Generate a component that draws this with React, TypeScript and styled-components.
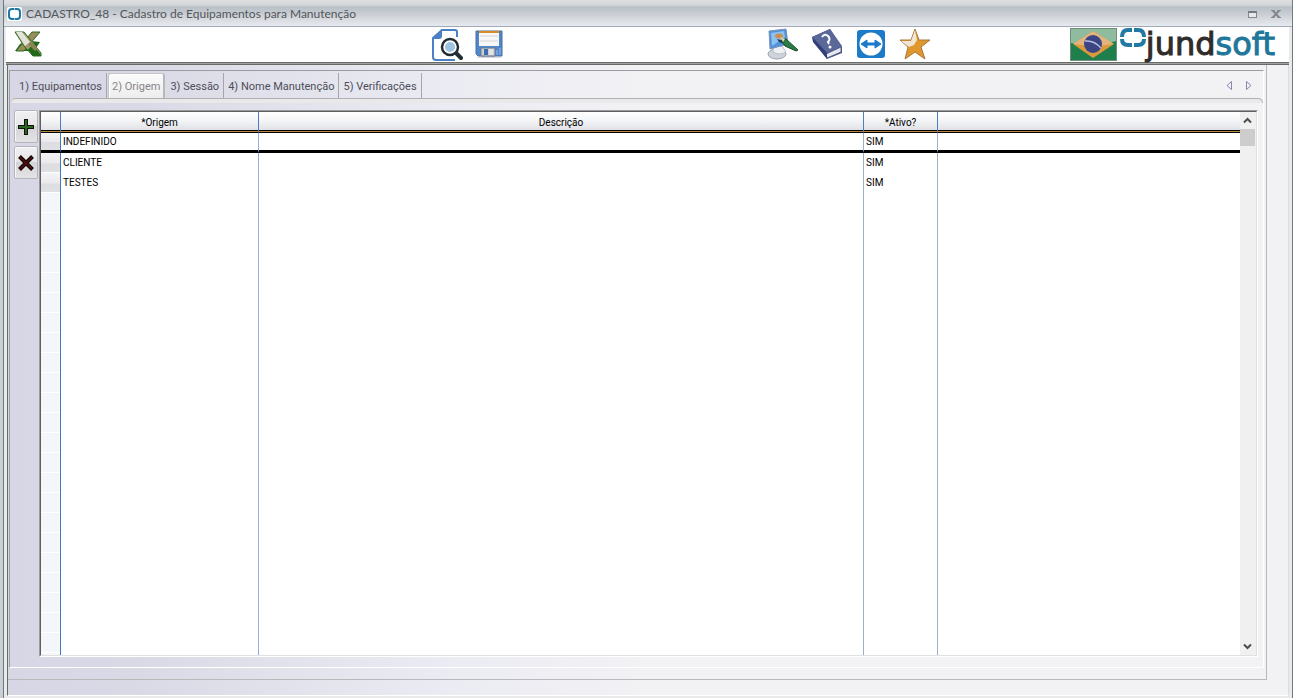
import React, { useState } from "react";
import styled, { createGlobalStyle } from "styled-components";

const GlobalStyle = createGlobalStyle`
  *, *::before, *::after { box-sizing: border-box; }
  html, body, #root { height: 100%; }
  body { margin: 0; background: #c8ced4; overflow: hidden; }
  button { font: inherit; padding: 0; margin: 0; border: 0; background: none; color: inherit; }
`;

const bodyFill =
  "linear-gradient(90deg, #d7d6e5 0, #d9d9e6 120px, #e1e1eb 260px, #ebebf3 440px, #f2f2f5 640px)";

const Window = styled.div`
  height: 100%;
  min-height: 320px;
  display: flex;
  flex-direction: column;
  padding: 0 1px 0 3px;
  background: linear-gradient(90deg, #c9d0d5 50%, #74797f 50%);
`;

const Frame = styled.div`
  flex: 1;
  min-height: 0;
  display: flex;
  flex-direction: column;
  border-left: 1px solid #70757b;
  background: #e9eaec;
`;

const TitleBar = styled.header`
  height: 27px;
  flex: none;
  display: flex;
  align-items: center;
  gap: 4px;
  padding: 2px 8px 0 3px;
  border-bottom: 1px solid #a3aab6;
  background: linear-gradient(#dfdfe1 0, #d3d6d9 5px, #b9c1c8 7px, #c3c9cf 12px, #dadce0 20px, #e6eaf2 26px);
  color: #53565c;
  font: 12px/16px Lato, "Open Sans", sans-serif;
`;

const Title = styled.h1`
  flex: 1;
  margin: 0;
  font: inherit;
  white-space: nowrap;
`;

const WindowButton = styled.button`
  width: 16px;
  height: 16px;
  margin-left: 4px;
  display: grid;
  place-items: center;
`;

const Toolbar = styled.div`
  height: 38px;
  flex: none;
  display: flex;
  align-items: center;
  margin: 0 3px 0 2px;
  padding: 0 14px 3px 6px;
  background: #fff;
  border-bottom: 1px solid #686a68;
  box-shadow: inset 0 -1px #a2a4a2, inset 0 -2px #686a68;
`;

const ToolGroup = styled.div<{ $gap: number }>`
  display: flex;
  align-items: center;
  gap: ${(p) => p.$gap}px;
`;

const Spacer = styled.div<{ $grow: number }>`
  flex: ${(p) => p.$grow} 1 0;
`;

const ToolButton = styled.button`
  display: grid;
  place-items: center;
  width: 32px;
  height: 34px;
`;

const Brand = styled.div`
  display: flex;
  align-items: center;
  gap: 3px;
`;

const BrandName = styled.div`
  display: flex;
  align-items: flex-start;
`;

const Wordmark = styled.span`
  color: #2f2c2b;
  font: 32px/34px "DejaVu Sans", Verdana, sans-serif;
  -webkit-text-stroke: 1px currentColor;
`;

const WordmarkAccent = styled.span`
  color: #20779a;
`;

const Workspace = styled.main`
  flex: 1;
  min-height: 0;
  display: flex;
  flex-direction: column;
  margin: 0 3px 2px 3px;
  border-left: 1px solid #686a68;
  border-right: 1px solid #dcdcde;
  border-bottom: 1px solid #fff;
  background: ${bodyFill};
`;

const Page = styled.div`
  flex: 1;
  min-height: 0;
  display: flex;
  margin-right: 21px;
  padding: 5px 2px 11px 1px;
  border-right: 1px solid #b9b9bb;
  border-bottom: 1px solid #b9b9bb;
`;

const Footer = styled.div`
  height: 15px;
  flex: none;
`;

const TabPanel = styled.section`
  flex: 1;
  min-width: 0;
  display: flex;
  flex-direction: column;
  border: 1px solid #9c9ca0;
  border-right-color: #fff;
  border-bottom-color: #fff;
`;

const TabStrip = styled.div`
  height: 27px;
  flex: none;
  display: flex;
  align-items: stretch;
  padding: 2px 8px 0 4px;
`;

const Tab = styled.button<{ $active: boolean }>`
  padding: 2px 4px 0;
  white-space: nowrap;
  font: 11px/16px Roboto, sans-serif;
  color: ${(p) => (p.$active ? "#85858a" : "#4c4e58")};
  border-right: 1px solid #a5a5aa;
  &:first-child { padding-left: 5px; }
  ${(p) =>
    p.$active &&
    `
    margin: 0 1px;
    padding: 1px 3px 0;
    border: 1px solid #c4c4c8;
    border-right: 2px solid #b7b7bc;
    border-bottom: 0;
    border-radius: 3px 3px 0 0;
    background: linear-gradient(#fbfbfb, #ededed);
    box-shadow: inset 1px 1px #fff;
  `}
`;

const TabArrows = styled.div`
  display: flex;
  align-items: center;
  gap: 8px;
  margin-left: auto;
`;

const ArrowButton = styled.button`
  width: 12px;
  height: 16px;
  display: grid;
  place-items: center;
`;

const TabEdge = styled.div`
  height: 5px;
  flex: none;
  margin-left: 1px;
  border-top: 1px solid #b0b0b3;
  border-right: 1px solid #b0b0b3;
  border-radius: 5px 5px 0 0;
  background: #e9e9ea;
`;

const PanelBody = styled.div`
  flex: 1;
  min-height: 0;
  display: flex;
  gap: 1px;
  padding: 7px 5px 10px 4px;
`;

const Actions = styled.div`
  display: flex;
  flex-direction: column;
  gap: 3px;
`;

const ActionButton = styled.button`
  width: 24px;
  height: 33px;
  display: grid;
  place-items: center;
  border: 1px solid #b4b4ba;
  border-radius: 2px;
  box-shadow: inset 1px 1px #f8f8fa;
  background: linear-gradient(#f0f0f2 0, #e6e6e8 48%, #d4d4d7 50%, #e4e4e7 100%);
`;

const Grid = styled.div`
  flex: 1;
  min-width: 0;
  display: flex;
  border: 1px solid;
  border-color: #9a9a9c #fff #fff #9a9a9c;
  background: #fff;
`;

const GridInner = styled.div`
  flex: 1;
  min-width: 0;
  display: flex;
  border: 1px solid;
  border-color: #5f5f5f #e0e0e1 #e0e0e1 #5f5f5f;
`;

const TableBox = styled.div`
  flex: 1;
  min-width: 0;
`;

const Table = styled.table`
  width: 100%;
  height: 100%;
  table-layout: fixed;
  border-collapse: separate;
  border-spacing: 0;
  color: #000;
  font: 10px/16px Roboto, "Liberation Sans", sans-serif;
`;

const Col = styled.col<{ $width?: number }>`
  width: ${(p) => (p.$width ? `${p.$width}px` : "auto")};
`;

const HeadCell = styled.th<{ $last?: boolean }>`
  height: 21px;
  padding: 2px 0 0;
  font-weight: 400;
  text-align: center;
  background: linear-gradient(#fff 0, #f3f4f6 45%, #dcdde1 100%) padding-box;
  border-right: ${(p) => (p.$last ? "0" : "1px solid #4a7fc4")};
  border-bottom: 1px solid #000;
  box-shadow: inset 0 -1px #b98a3c, inset 0 -2px #000;
`;

const RowHead = styled.th<{ $selected?: boolean }>`
  height: 20px;
  padding: 0;
  border-right: 1px solid #3f78c6;
  border-bottom: ${(p) => (p.$selected ? "3px solid #000" : "0")};
  background: linear-gradient(#f4f4f6 0, #eaeaed 50%, #dddee2 55%, #dfe0e4 100%) padding-box;
  ${(p) => !p.$selected && "box-shadow: inset 0 -1px #fff;"}
`;

const Cell = styled.td<{ $selected?: boolean; $line: string }>`
  height: 20px;
  padding: ${(p) => (p.$selected ? "1px 2px 0" : "0 2px")};
  white-space: nowrap;
  border-right: ${(p) => (p.$line ? `1px solid ${p.$line}` : "0")};
  border-bottom: ${(p) => (p.$selected ? "3px solid #000" : "0")};
`;

const FillHead = styled.td`
  padding: 0;
  border-right: 1px solid #3f78c6;
  background: repeating-linear-gradient(#f3f7fc 0 19px, #fff 19px 20px);
`;

const FillCell = styled.td<{ $line: string }>`
  padding: 0;
  border-right: ${(p) => (p.$line ? `1px solid ${p.$line}` : "0")};
`;

const ScrollBar = styled.div`
  width: 16px;
  flex: none;
  display: flex;
  flex-direction: column;
  background: #f0f0f0;
`;

const ScrollButton = styled.button`
  width: 15px;
  height: 17px;
  display: grid;
  place-items: center;
`;

const ScrollTrack = styled.div`
  flex: 1;
`;

const ScrollThumb = styled.div`
  width: 15px;
  height: 17px;
  background: #cdcdcd;
`;

const AppMark = () => (
  <svg width="15" height="14" viewBox="0 0 15 14">
    <rect width="15" height="14" rx="2" fill="#fff" />
    <rect x="2" y="2" width="11" height="10" rx="3" fill="none" stroke="#1f78a4" strokeWidth="2" />
    <path d="M7.500 1v2M7.500 11v2" stroke="#9cc6da" strokeWidth="1" />
  </svg>
);

const ExcelIcon = () => (
  <svg width="28" height="26" viewBox="0 0 28 26">
    <path d="M17 10l9 1-2 3-2 3 3 3H1l5-7 4-2z" fill="#23691a" />
    <path d="M18 1h8L10 20H2z" fill="#968c5c" stroke="#2f6b20" />
    <path d="M1 1h9l17 21v3h-8L10 15z" fill="#a09a68" stroke="#2f6b20" />
    <path d="M2 1h6l8 10-5 4z" fill="#e2e4da" />
    <path d="M4 20h9l5-6 6 6 3 4v1h-8l-4-5z" fill="#23691a" />
    <path d="M14 13l4-3 6 8-3 2z" fill="#8a8358" />
  </svg>
);

const PreviewIcon = () => (
  <svg width="32" height="33" viewBox="0 0 32 33">
    <path d="M26 9V4q0-2-2-2H11L2 10v19q0 3 3 3h19" fill="none" stroke="#4b7fc6" strokeWidth="2" />
    <path d="M11 1v7q0 3-3 3H1z" fill="#4b7fc6" />
    <path d="M25 25l5 5" stroke="#222d33" strokeWidth="4" strokeLinecap="round" />
    <circle cx="19" cy="19" r="8" fill="#fff" stroke="#222d33" strokeWidth="2.500" />
    <circle cx="19" cy="19" r="5" fill="#9fc4e2" />
  </svg>
);

const SaveIcon = () => (
  <svg width="28" height="28" viewBox="0 0 28 28">
    <path d="M1 1h26v25H3l-2-2z" fill="#4f86cc" stroke="#4f6f9c" />
    <path d="M4 1h20v15H4z" fill="#f7f7f7" />
    <path d="M4 1h20v2H4z" fill="#d98a25" />
    <path d="M5 6h18M5 11h18" stroke="#d5d5d8" />
    <path d="M6 18h14v8H6z" fill="#cdd0d4" stroke="#6b7889" />
    <path d="M9 19h4v6H9z" fill="#3f6dab" />
    <path d="M14 19h4v6h-4z" fill="#e4e4e6" />
    <path d="M22 20v5M25 18v7" stroke="#9cc0ec" />
    <path d="M2 27.500h24" stroke="#d8d8da" />
  </svg>
);

const PaintIcon = () => (
  <svg width="32" height="32" viewBox="0 0 32 32">
    <ellipse cx="10" cy="26" rx="9" ry="5" fill="#cfd3dc" stroke="#9ba1ae" />
    <path d="M6 19l9-1 4 6q-6 4-13 0z" fill="#eef0f4" stroke="#b8bdc8" />
    <path d="M2 3l17-2 2 15-18 5z" fill="#4f93da" stroke="#7e93b5" />
    <path d="M4 5l13-2 1 6-13 9z" fill="#8cc2f1" />
    <ellipse cx="12" cy="8" rx="4" ry="2.500" fill="#c98f50" />
    <path d="M10 11l8 2-1 3-5-2z" fill="#1d3a66" />
    <path d="M14 12l5-1 12 11-2 1-11-5z" fill="#2c7b42" stroke="#184d29" />
    <path d="M13 9l5 2-2 3z" fill="#e6d3a0" />
  </svg>
);

const HelpBookIcon = () => (
  <svg width="32" height="32" viewBox="0 0 32 32">
    <path d="M1 9L19 1l12 18v6L16 31z" fill="#3b4a86" />
    <path d="M15 26l15-7v5l-14 6z" fill="#e8e9ee" stroke="#5c6591" />
    <path d="M1 9L19 1l12 17-15 7z" fill="#5a6799" />
    <path d="M1 9l15 16v6L2 14z" fill="#313e78" />
    <path d="M11 9q3-4 6-1t0 6l1 2" fill="none" stroke="#fff" strokeWidth="2" />
    <circle cx="19" cy="19" r="1.500" fill="#fff" />
  </svg>
);

const RemoteIcon = () => (
  <svg width="28" height="28" viewBox="0 0 28 28">
    <rect width="28" height="28" rx="3" fill="#1b7bc9" />
    <circle cx="14" cy="14" r="11.500" fill="#fff" />
    <path d="M4 14l6-4v3h8v-3l6 4-6 4v-3h-8v3z" fill="#1b7bc9" stroke="#1b7bc9" />
  </svg>
);

const StarIcon = () => (
  <svg width="32" height="32" viewBox="0 0 32 32">
    <path d="M16 1l4 11h11l-9 7 4 12-10-7-10 7 3-12-8-7h11z" fill="#e0982e" stroke="#a8773a" />
    <path d="M16 2l-4 11H2l8 6 5-2 3-5z" fill="#f0e6d4" />
  </svg>
);

const FlagIcon = () => (
  <svg width="47" height="33" viewBox="0 0 47 33">
    <rect width="47" height="33" fill="#1f7f4c" />
    <path d="M1 1h45v12Q24 20 1 15z" fill="#8fbc9f" />
    <path d="M3 16L23 3l21 13-21 14z" fill="#dc9a3d" />
    <path d="M3 16L23 3l21 13q-20 3-41 0z" fill="#e3b47c" />
    <circle cx="23" cy="16" r="9" fill="#3b4586" />
    <path d="M15 13q9-1 16 7" fill="none" stroke="#b9c0dc" strokeWidth="1.500" />
    <rect x=".5" y=".5" width="46" height="32" fill="none" stroke="#6f8f7c" />
  </svg>
);

const BrandMark = () => (
  <svg width="26" height="21" viewBox="0 0 26 21">
    <g fill="none" stroke="#2279a3" strokeWidth="4">
      <path d="M12 3H8Q2 3 2 10" />
      <path d="M14 3h4q6 0 6 7" />
      <path d="M12 18H8q-6 0-6-6" />
      <path d="M14 18h4q6 0 6-6" />
    </g>
  </svg>
);

const Chevron = ({ down }: { down?: boolean }) => (
  <svg width="9" height="7" viewBox="0 0 9 7">
    <path d={down ? "M1 1.500l3.500 3.500L8 1.500" : "M1 5.500L4.500 2 8 5.500"} fill="none" stroke="#4d4d4d" strokeWidth="2" />
  </svg>
);

const Triangle = ({ right }: { right?: boolean }) => (
  <svg width="6" height="9" viewBox="0 0 6 9">
    <path d={right ? "M.5.5v8l4.500-4z" : "M5.500.5v8L1 4.500z"} fill="none" stroke="#8786ad" />
  </svg>
);

const tabs = ["1) Equipamentos", "2) Origem", "3) Sessão", "4) Nome Manutenção", "5) Verificações"];

const rows = [
  { origem: "INDEFINIDO", descricao: "", ativo: "SIM" },
  { origem: "CLIENTE", descricao: "", ativo: "SIM" },
  { origem: "TESTES", descricao: "", ativo: "SIM" },
];

const BLUE = "#8fb1dc";
const STEEL = "#9fafcb";

export default function App() {
  const [active, setActive] = useState(1);
  const [selected, setSelected] = useState(0);

  return (
    <Window>
      <GlobalStyle />
      <Frame>
        <TitleBar>
          <AppMark />
          <Title>CADASTRO_48 - Cadastro de Equipamentos para Manutenção</Title>
          <WindowButton aria-label="Maximizar">
            <svg width="9" height="7" viewBox="0 0 9 7">
              <rect x=".5" y=".5" width="8" height="6" fill="#e8e8ea" stroke="#85888d" />
              <path d="M0 1h9" stroke="#777a80" strokeWidth="2" />
            </svg>
          </WindowButton>
          <WindowButton aria-label="Fechar">
            <svg width="10" height="8" viewBox="0 0 10 8">
              <path d="M1.500 0l7 8M8.500 0l-7 8" stroke="#83868c" strokeWidth="2" />
              <path d="M0 .5h3.500M6.500.5H10M0 7.500h3.500M6.500 7.500H10" stroke="#83868c" />
            </svg>
          </WindowButton>
        </TitleBar>

        <Toolbar>
          <ToolButton aria-label="Exportar para Excel"><ExcelIcon /></ToolButton>
          <Spacer $grow={386} />
          <ToolGroup $gap={10}>
            <ToolButton aria-label="Visualizar"><PreviewIcon /></ToolButton>
            <ToolButton aria-label="Salvar"><SaveIcon /></ToolButton>
          </ToolGroup>
          <Spacer $grow={262} />
          <ToolGroup $gap={12}>
            <ToolButton aria-label="Aparência"><PaintIcon /></ToolButton>
            <ToolButton aria-label="Ajuda"><HelpBookIcon /></ToolButton>
            <ToolButton aria-label="Acesso remoto"><RemoteIcon /></ToolButton>
            <ToolButton aria-label="Favoritos"><StarIcon /></ToolButton>
          </ToolGroup>
          <Spacer $grow={138} />
          <Brand>
            <FlagIcon />
            <BrandName>
              <BrandMark />
              <Wordmark>jund<WordmarkAccent>soft</WordmarkAccent></Wordmark>
            </BrandName>
          </Brand>
        </Toolbar>

        <Workspace>
          <Page>
            <TabPanel>
              <TabStrip role="tablist">
                {tabs.map((t, i) => (
                  <Tab key={t} role="tab" aria-selected={i === active} $active={i === active} onClick={() => setActive(i)}>
                    {t}
                  </Tab>
                ))}
                <TabArrows>
                  <ArrowButton aria-label="Aba anterior"><Triangle /></ArrowButton>
                  <ArrowButton aria-label="Próxima aba"><Triangle right /></ArrowButton>
                </TabArrows>
              </TabStrip>
              <TabEdge />
              <PanelBody>
                <Actions>
                  <ActionButton aria-label="Adicionar">
                    <svg width="16" height="16" viewBox="0 0 16 16">
                      <path d="M6 0h4v6h6v4h-6v6H6v-6H0V6h6z" fill="#111" />
                      <path d="M8 1v14M1 8h14" stroke="#2a661f" strokeWidth="2" />
                    </svg>
                  </ActionButton>
                  <ActionButton aria-label="Excluir">
                    <svg width="16" height="16" viewBox="0 0 16 16">
                      <path d="M1.500 1.500l13 13M14.500 1.500l-13 13" stroke="#0c0404" strokeWidth="4" />
                      <path d="M2 2l12 12M14 2L2 14" stroke="#4a0c0d" strokeWidth="2" />
                    </svg>
                  </ActionButton>
                </Actions>
                <Grid>
                  <GridInner>
                    <TableBox>
                      <Table>
                        <colgroup>
                          <Col $width={20} />
                          <Col $width={198} />
                          <Col $width={605} />
                          <Col $width={74} />
                          <Col />
                        </colgroup>
                        <thead>
                          <tr>
                            <HeadCell />
                            <HeadCell scope="col">*Origem</HeadCell>
                            <HeadCell scope="col">Descrição</HeadCell>
                            <HeadCell scope="col">*Ativo?</HeadCell>
                            <HeadCell $last />
                          </tr>
                        </thead>
                        <tbody>
                          {rows.map((r, i) => (
                            <tr key={r.origem} onClick={() => setSelected(i)}>
                              <RowHead scope="row" $selected={i === selected} />
                              <Cell $selected={i === selected} $line={BLUE}>{r.origem}</Cell>
                              <Cell $selected={i === selected} $line={STEEL}>{r.descricao}</Cell>
                              <Cell $selected={i === selected} $line={STEEL}>{r.ativo}</Cell>
                              <Cell $selected={i === selected} $line="" />
                            </tr>
                          ))}
                          <tr>
                            <FillHead />
                            <FillCell $line={BLUE} />
                            <FillCell $line={STEEL} />
                            <FillCell $line={STEEL} />
                            <FillCell $line="" />
                          </tr>
                        </tbody>
                      </Table>
                    </TableBox>
                    <ScrollBar>
                      <ScrollButton aria-label="Rolar para cima"><Chevron /></ScrollButton>
                      <ScrollTrack><ScrollThumb /></ScrollTrack>
                      <ScrollButton aria-label="Rolar para baixo"><Chevron down /></ScrollButton>
                    </ScrollBar>
                  </GridInner>
                </Grid>
              </PanelBody>
            </TabPanel>
          </Page>
          <Footer />
        </Workspace>
      </Frame>
    </Window>
  );
}
